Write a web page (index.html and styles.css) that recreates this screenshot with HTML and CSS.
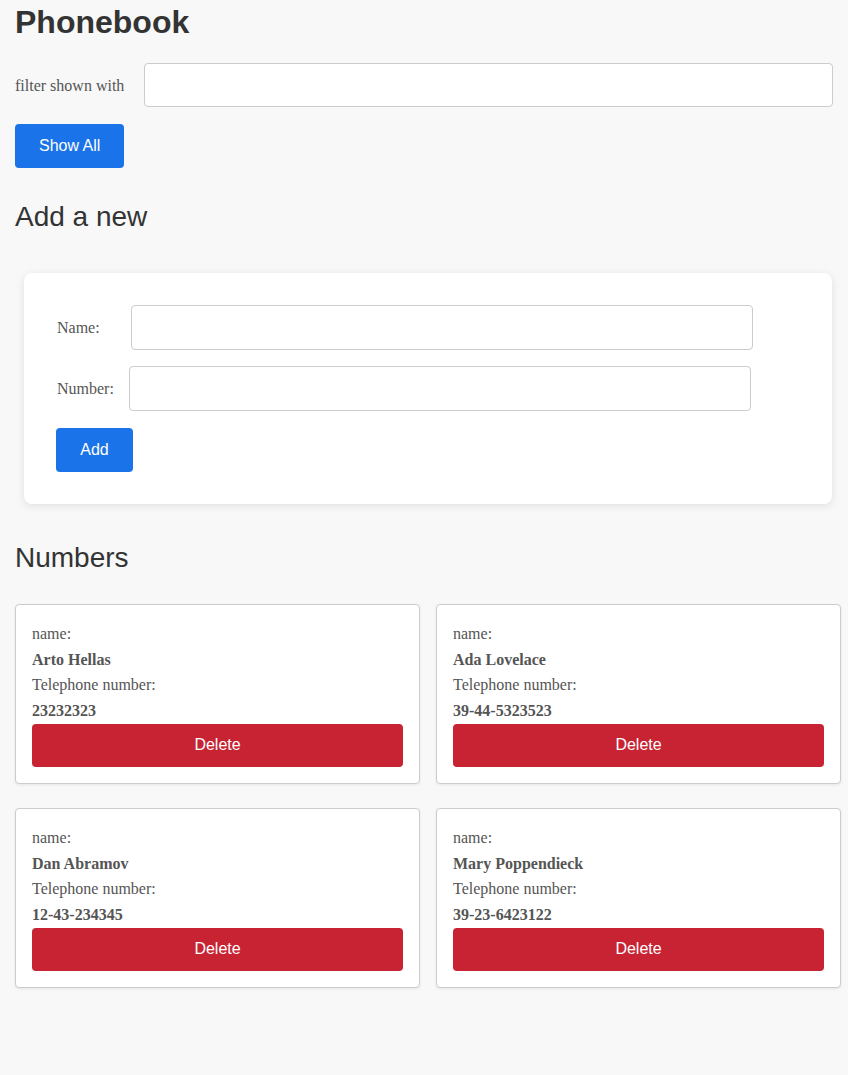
FILE: index.html
```html
<!DOCTYPE html>
<html lang="en">
<head>
<meta charset="utf-8">
<title>Phonebook</title>
<link rel="stylesheet" href="styles.css">
</head>
<body>
<div class="page">
  <h1 class="title">Phonebook</h1>
  <div class="filter-row">
    <label class="filter-label">filter shown with</label>
    <input class="text-input filter-input" type="text">
  </div>
  <button class="btn btn-primary show-all">Show All</button>

  <h2 class="section-title add-title">Add a new</h2>
  <form class="form-card">
    <div class="form-row">
      <label class="form-label name-label">Name:</label>
      <input class="text-input form-input" type="text">
    </div>
    <div class="form-row">
      <label class="form-label number-label">Number:</label>
      <input class="text-input form-input" type="text">
    </div>
    <div class="form-actions">
      <button class="btn btn-primary add-btn" type="button">Add</button>
    </div>
  </form>

  <h2 class="section-title numbers-title">Numbers</h2>
  <div class="cards">
    <div class="person-card">
      <div class="line">name:</div>
      <div class="line strong">Arto Hellas</div>
      <div class="line">Telephone number:</div>
      <div class="line strong">23232323</div>
      <button class="btn btn-danger">Delete</button>
    </div>
    <div class="person-card">
      <div class="line">name:</div>
      <div class="line strong">Ada Lovelace</div>
      <div class="line">Telephone number:</div>
      <div class="line strong">39-44-5323523</div>
      <button class="btn btn-danger">Delete</button>
    </div>
    <div class="person-card">
      <div class="line">name:</div>
      <div class="line strong">Dan Abramov</div>
      <div class="line">Telephone number:</div>
      <div class="line strong">12-43-234345</div>
      <button class="btn btn-danger">Delete</button>
    </div>
    <div class="person-card">
      <div class="line">name:</div>
      <div class="line strong">Mary Poppendieck</div>
      <div class="line">Telephone number:</div>
      <div class="line strong">39-23-6423122</div>
      <button class="btn btn-danger">Delete</button>
    </div>
  </div>
</div>
</body>
</html>
```
FILE: styles.css
```css
* { box-sizing: border-box; }

html, body {
  margin: 0;
  padding: 0;
  background: #f8f8f8;
}

body {
  font-family: "Liberation Serif", "Times New Roman", serif;
  font-size: 16px;
  color: #555;
}

.page {
  padding: 0 7px 60px 15px;
}

.title {
  font-family: "Liberation Sans", Arial, sans-serif;
  font-size: 32px;
  font-weight: bold;
  line-height: 1.2;
  color: #333;
  margin: 3px 0 0;
}

.filter-row {
  display: flex;
  align-items: center;
  margin-top: 21.6px;
  margin-right: 8px;
}

.filter-label {
  margin-right: 20px;
  padding-top: 2px;
  white-space: nowrap;
}

.text-input {
  height: 44px;
  border: 1px solid #ccc;
  border-radius: 4px;
  background: #fff;
  font-size: 16px;
  padding: 0 10px;
}

.filter-input {
  flex: 1;
}

.btn {
  font-family: "Liberation Sans", Arial, sans-serif;
  font-size: 16px;
  color: #fff;
  border: none;
  border-radius: 4px;
  height: 44px;
  padding: 0 24px;
  cursor: pointer;
}

.btn-primary {
  background: #1a73e8;
}

.show-all {
  display: block;
  margin-top: 17px;
}

.add-btn {
  min-width: 77px;
}

.section-title {
  font-family: "Liberation Sans", Arial, sans-serif;
  font-size: 28px;
  font-weight: normal;
  line-height: 1.2;
  color: #333;
  margin: 0;
}

.add-title {
  margin-top: 32.5px;
}

.form-card {
  margin: 39px 9px 0 9px;
  background: #fff;
  border-radius: 8px;
  box-shadow: 0 2px 8px rgba(0, 0, 0, 0.1);
  padding: 32px;
  display: flex;
  flex-direction: column;
  gap: 16px;
}

.form-row {
  display: flex;
  align-items: center;
}

.form-label {
  flex: none;
  padding-left: 1px;
}

.name-label { width: 75px; }
.number-label { width: 73px; }

.form-input {
  width: 622px;
  height: 45px;
}

.form-actions {
  margin-top: 1px;
}

.numbers-title {
  margin-top: 36.5px;
}

.cards {
  margin-top: 30px;
  display: grid;
  grid-template-columns: 1fr 1fr;
  column-gap: 16px;
  row-gap: 24px;
}

.person-card {
  background: #fff;
  border: 1px solid #ccc;
  border-radius: 4px;
  box-shadow: 0 1px 3px rgba(0, 0, 0, 0.08);
  padding: 16px;
}

.line {
  line-height: 25.6px;
}

.strong {
  font-weight: bold;
}

.btn-danger {
  display: block;
  width: 100%;
  height: 43.6px;
  background: #c82333;
}
```
